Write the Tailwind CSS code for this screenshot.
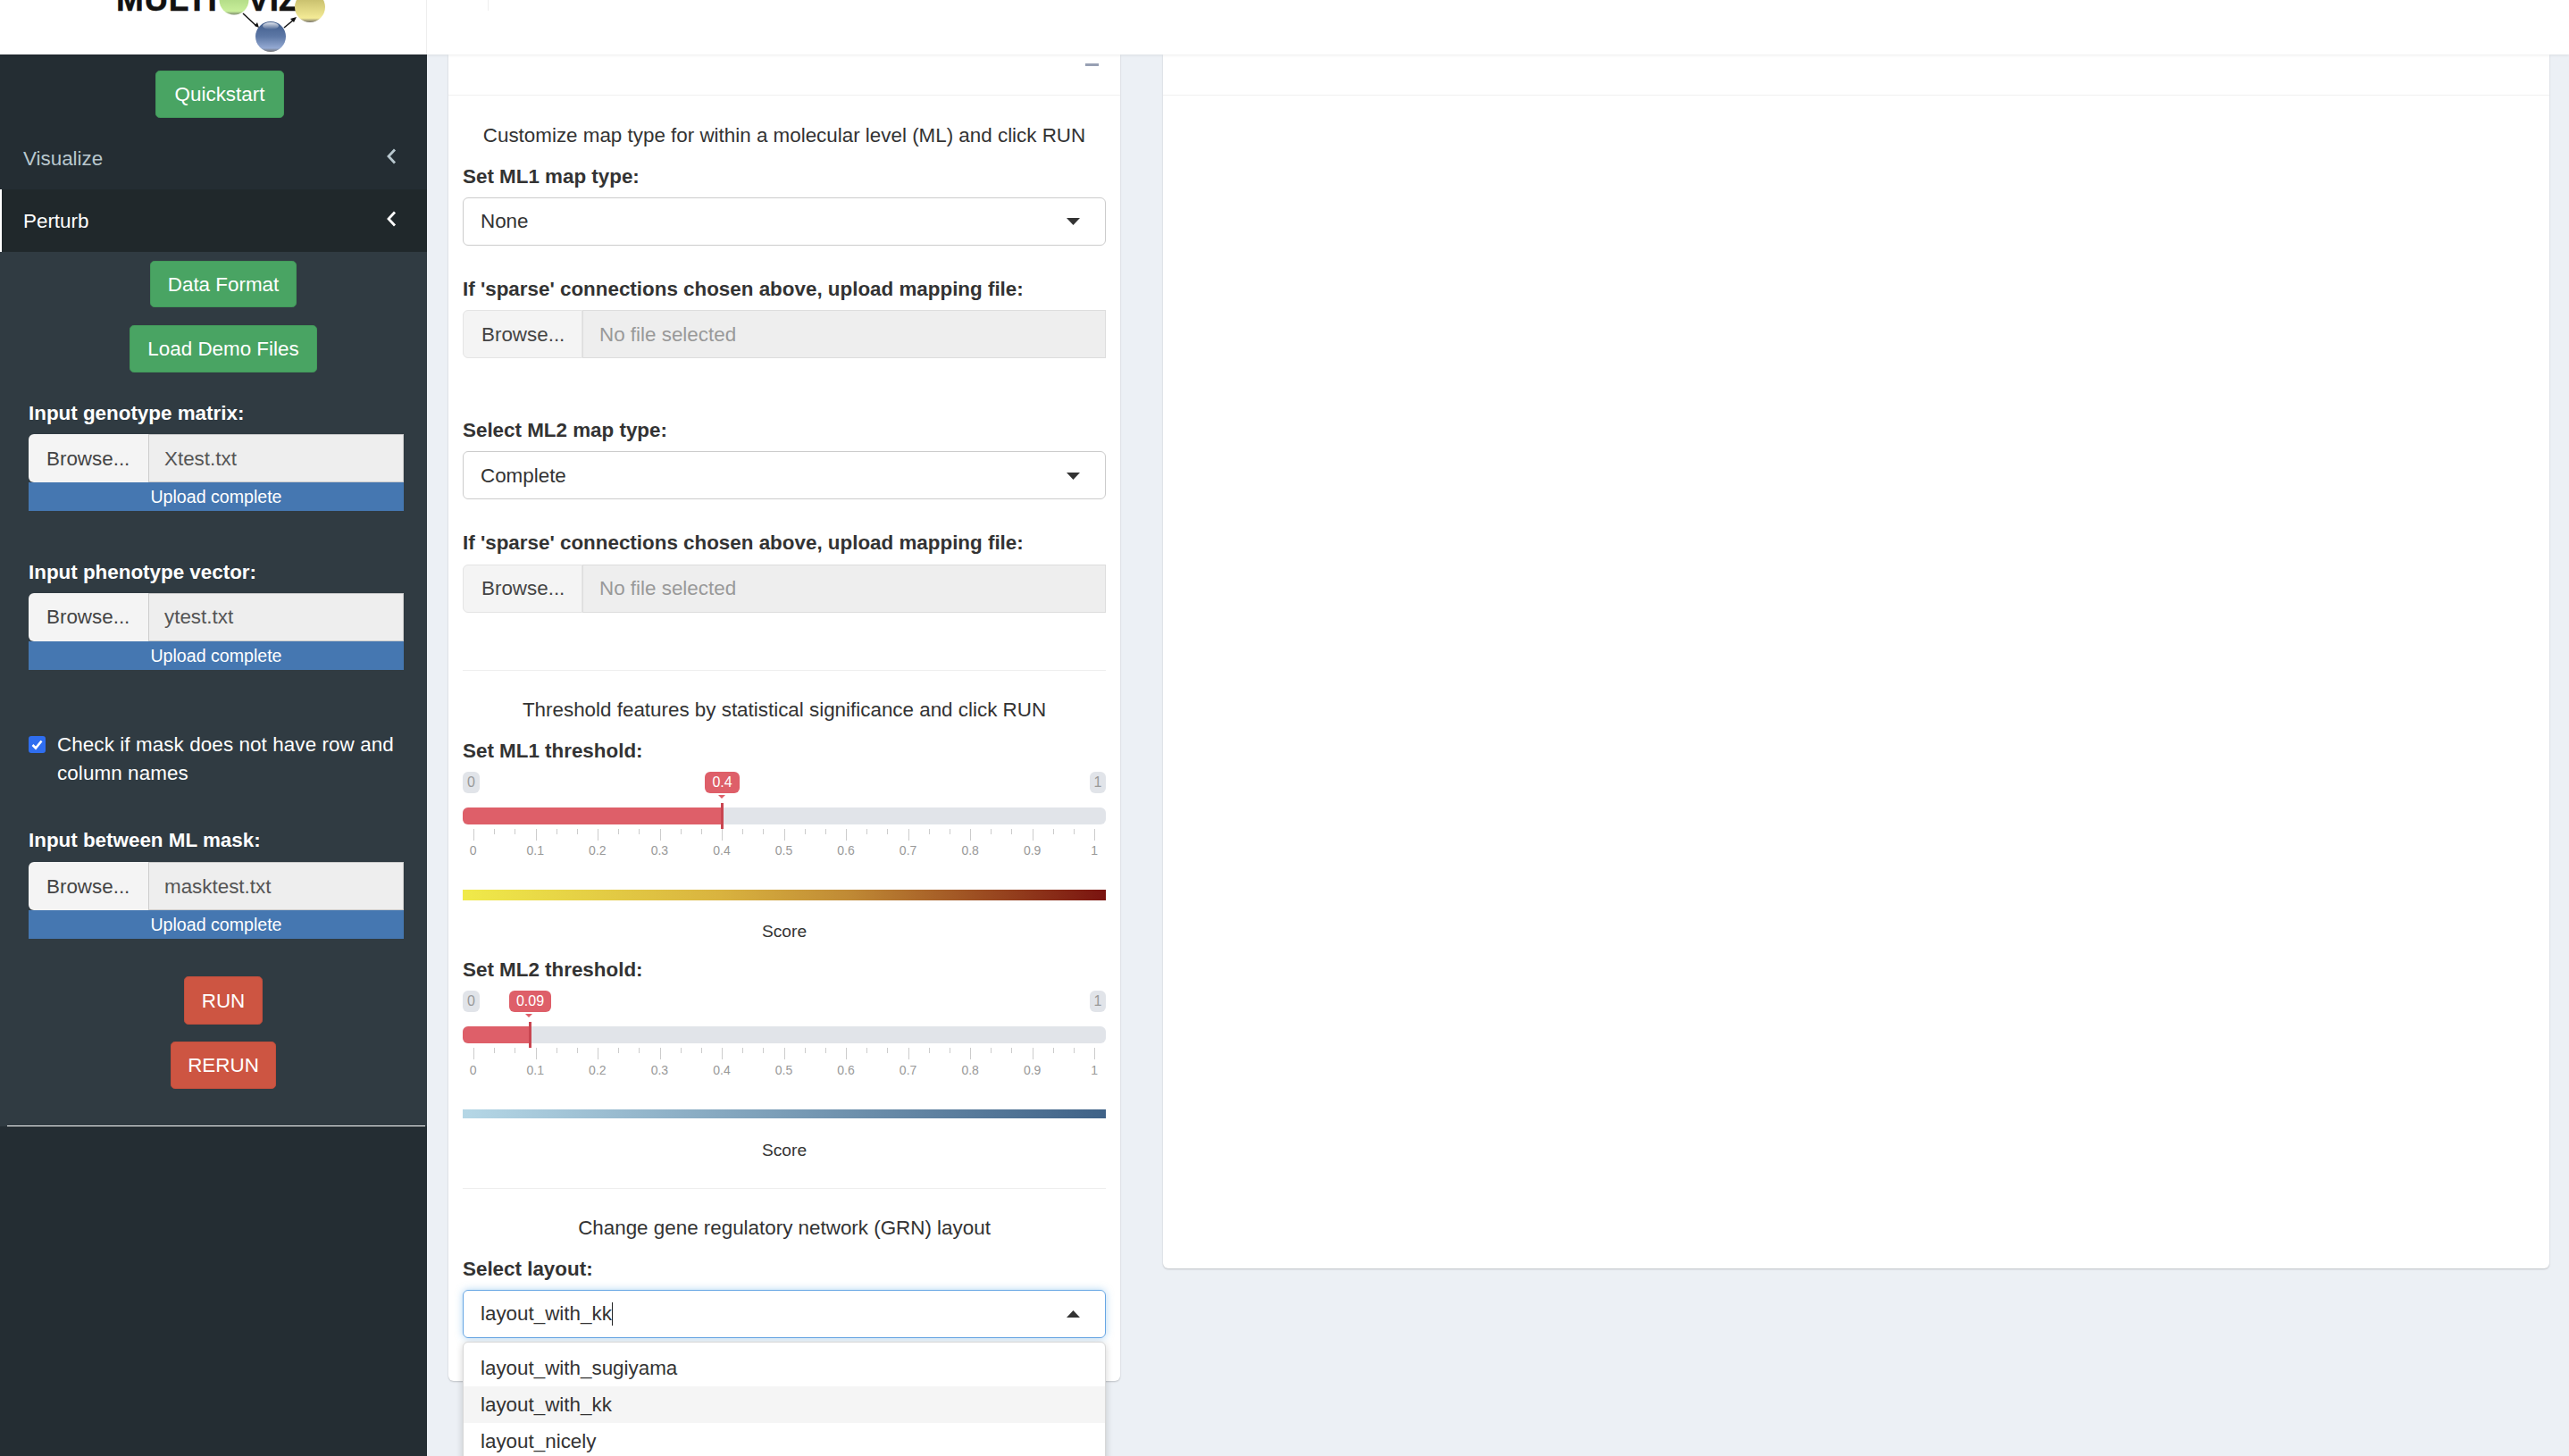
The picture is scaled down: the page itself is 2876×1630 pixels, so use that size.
<!DOCTYPE html>
<html lang="en">
<head>
    <meta charset="UTF-8">
    <title>Multi-Viz</title>
    <script src="https://cdn.jsdelivr.net/npm/@tailwindcss/browser@4"></script>
</head>
<body class="bg-[#ecf0f5]">
<div class="w-[2876px] h-[1630px] overflow-hidden flex flex-col font-['Liberation_Sans',Arial,sans-serif] text-[22.4px] text-[#333]">

    <!-- top bar -->
    <header class="h-[61px] shrink-0 flex bg-white relative z-10 shadow-[0_1px_3px_rgba(0,0,0,0.08)]">
        <div class="w-[478px] shrink-0 h-[61px] border-r border-[#eee]">
            <svg width="477" height="61" viewBox="0 0 477 61">
                <defs>
                    <linearGradient id="ballGreen" x1="0" y1="0" x2="0" y2="1"><stop offset="0" stop-color="#9cc873"/><stop offset="0.88" stop-color="#c8ee9a"/><stop offset="1" stop-color="#7f8c70"/></linearGradient>
                    <linearGradient id="ballYellow" x1="0" y1="0" x2="0" y2="1"><stop offset="0" stop-color="#b8af5e"/><stop offset="0.86" stop-color="#f4eb96"/><stop offset="1" stop-color="#76736a"/></linearGradient>
                    <linearGradient id="ballBlue" x1="0" y1="0" x2="0" y2="1"><stop offset="0" stop-color="#3f5b8a"/><stop offset="0.5" stop-color="#5d78a6"/><stop offset="0.88" stop-color="#94a9d2"/><stop offset="1" stop-color="#6e6e6e"/></linearGradient>
                    <linearGradient id="shine" x1="0" y1="0" x2="0" y2="1"><stop offset="0" stop-color="#fff" stop-opacity="0.85"/><stop offset="1" stop-color="#fff" stop-opacity="0"/></linearGradient>
                </defs>
                <text x="130" y="12" font-family="Liberation Sans" font-weight="700" font-size="37" letter-spacing="0.6" stroke="#111" stroke-width="0.5" fill="#111">MULTI</text>
                <text x="277" y="12" font-family="Liberation Sans" font-weight="700" font-size="37" stroke="#111" stroke-width="0.5" fill="#111">VIZ</text>
                <circle cx="262" cy="0" r="16.5" fill="url(#ballGreen)"/>
                <circle cx="347" cy="8" r="17" fill="url(#ballYellow)"/>
                <path d="M272 15 287 29" stroke="#111" stroke-width="1.5"/>
                <path d="M290 31 285 29 288 25Z" fill="#111"/>
                <path d="M318 31 329 22" stroke="#111" stroke-width="1.5"/>
                <path d="M332 19 329 25 325 21Z" fill="#111"/>
                <circle cx="303" cy="41" r="17" fill="url(#ballBlue)"/>
                <ellipse cx="303" cy="29" rx="9" ry="4" fill="url(#shine)"/>
            </svg>
        </div>
        <div class="ml-[68px] w-px h-[12px] bg-[#eee]"></div>
    </header>

    <div class="flex-1 flex min-h-0">

        <!-- sidebar -->
        <aside class="w-[478px] shrink-0 bg-[#242d33] flex flex-col">
            <a class="mt-[18px] ml-[174px] w-[144px] h-[53px] pt-[1px] flex items-center justify-center rounded-[4.8px] border border-[#439a5b] bg-[#49a463] text-white">Quickstart</a>

            <div class="mt-[10px] h-[70px] pl-[26px] pr-[34px] flex items-center justify-between text-[#b8c7ce]">
                <span class="pt-[2px]">Visualize</span>
                <svg width="12" height="18" viewBox="0 0 12 18" class="mt-[-4px]"><path d="M10 1.5 3 9l7 7.5" fill="none" stroke="#b8c7ce" stroke-width="2.8"/></svg>
            </div>
            <div class="h-[70px] pl-[24px] pr-[34px] flex items-center justify-between border-l-2 border-white bg-[#20282b] text-white">
                <span class="pt-[2px]">Perturb</span>
                <svg width="12" height="18" viewBox="0 0 12 18" class="mt-[-4px]"><path d="M10 1.5 3 9l7 7.5" fill="none" stroke="#fff" stroke-width="2.8"/></svg>
            </div>

            <div class="bg-[#303b42] h-[979px] flex flex-col">
                <a class="mt-[10px] ml-[168px] w-[164px] h-[52px] pt-[1px] flex items-center justify-center rounded-[4.8px] border border-[#439a5b] bg-[#49a463] text-white">Data Format</a>
                <a class="mt-[20px] ml-[145px] w-[210px] h-[53px] pt-[1px] flex items-center justify-center rounded-[4.8px] border border-[#439a5b] bg-[#49a463] text-white">Load Demo Files</a>

                <label class="block mt-[30px] ml-[32px] h-[32px] leading-[32px] font-bold text-white">Input genotype matrix:</label>
                <div class="mt-[7px] mx-[32px] w-[420px]">
                    <div class="flex h-[54px]">
                        <span class="w-[134px] pt-[1px] flex items-center pl-[20px] bg-[#f4f4f4] text-[#444] rounded-tl-[6px] rounded-bl-[6px]">Browse...</span>
                        <span class="flex-1 pt-[1px] flex items-center pl-[17px] bg-[#eee] text-[#555] border border-[#ccc]">Xtest.txt</span>
                    </div>
                    <div class="h-[32px] pt-[1px] flex items-center justify-center bg-[#4577b1] text-white text-[19.6px]">Upload complete</div>
                </div>

                <label class="block mt-[52px] ml-[32px] h-[32px] pt-[1px] leading-[32px] font-bold text-white">Input phenotype vector:</label>
                <div class="mt-[8px] mx-[32px] w-[420px]">
                    <div class="flex h-[54px]">
                        <span class="w-[134px] flex items-center pl-[20px] bg-[#f4f4f4] text-[#444] rounded-tl-[6px] rounded-bl-[6px]">Browse...</span>
                        <span class="flex-1 flex items-center pl-[17px] bg-[#eee] text-[#555] border border-[#ccc]">ytest.txt</span>
                    </div>
                    <div class="h-[32px] pt-[1px] flex items-center justify-center bg-[#4577b1] text-white text-[19.6px]">Upload complete</div>
                </div>

                <div class="mt-[67px] ml-[32px] w-[420px] flex text-white leading-[32px]">
                    <span class="mt-[7px] w-[19px] h-[19px] shrink-0 rounded-[3px] bg-[#2f6ef0] flex items-center justify-center">
                        <svg width="15" height="15" viewBox="0 0 15 15"><path d="M2.5 8 6 11.5 12.5 3.5" fill="none" stroke="#fff" stroke-width="2.6"/></svg>
                    </span>
                    <span class="ml-[13px] pt-[1px] tracking-[0.1px]">Check if mask does not have row and column names</span>
                </div>

                <label class="block mt-[42px] ml-[32px] h-[33px] pt-[1px] leading-[32px] font-bold text-white">Input between ML mask:</label>
                <div class="mt-[8px] mx-[32px] w-[420px]">
                    <div class="flex h-[54px]">
                        <span class="w-[134px] pt-[1px] flex items-center pl-[20px] bg-[#f4f4f4] text-[#444] rounded-tl-[6px] rounded-bl-[6px]">Browse...</span>
                        <span class="flex-1 pt-[1px] flex items-center pl-[17px] bg-[#eee] text-[#555] border border-[#ccc]">masktest.txt</span>
                    </div>
                    <div class="h-[32px] pt-[1px] flex items-center justify-center bg-[#4577b1] text-white text-[19.6px]">Upload complete</div>
                </div>

                <a class="mt-[42px] ml-[206px] w-[88px] h-[54px] pt-[1px] flex items-center justify-center rounded-[4.8px] border border-[#c24f3d] bg-[#cd5542] text-white">RUN</a>
                <a class="mt-[19px] ml-[191px] w-[118px] h-[53px] flex items-center justify-center rounded-[4.8px] border border-[#c24f3d] bg-[#cd5542] text-white">RERUN</a>

                <div class="mt-auto ml-[8px] w-[468px] h-px bg-white"></div>
            </div>
        </aside>

        <!-- left box -->
        <section class="relative ml-[24px] w-[752px] h-[1485px] shrink-0 bg-white rounded-b-[6px] shadow-[0_1px_2px_rgba(0,0,0,0.2)]">
            <div class="h-[46px] border-b border-[#f0f0f0] relative">
                <span class="absolute right-[24px] top-[10px] w-[15px] h-[3px] bg-[#97a0b3]"></span>
            </div>

            <div class="px-[16px] flex flex-col">
                <p class="mt-[28px] h-[32px] pt-[1px] leading-[32px] text-center">Customize map type for within a molecular level (ML) and click RUN</p>

                <label class="mt-[14px] h-[32px] pt-[1px] leading-[32px] font-bold">Set ML1 map type:</label>
                <div class="mt-[8px] h-[54px] flex items-center justify-between pl-[19px] pr-[28px] rounded-[6px] border border-[#ccc]">
                    <span>None</span>
                    <svg width="15" height="8" viewBox="0 0 15 8"><path d="M0 0h15L7.5 8Z" fill="#333"/></svg>
                </div>

                <label class="mt-[32px] h-[32px] pt-[1px] leading-[32px] font-bold">If 'sparse' connections chosen above, upload mapping file:</label>
                <div class="mt-[8px] flex h-[54px]">
                    <span class="w-[134px] pt-[1px] flex items-center pl-[20px] bg-[#f4f4f4] text-[#444] border border-[#e4e4e4] rounded-tl-[6px] rounded-bl-[6px]">Browse...</span>
                    <span class="flex-1 pt-[1px] flex items-center pl-[18px] bg-[#eee] text-[#999] border border-[#ddd]">No file selected</span>
                </div>

                <label class="mt-[64px] h-[32px] pt-[1px] leading-[32px] font-bold">Select ML2 map type:</label>
                <div class="mt-[8px] h-[54px] pt-[1px] flex items-center justify-between pl-[19px] pr-[28px] rounded-[6px] border border-[#ccc]">
                    <span>Complete</span>
                    <svg width="15" height="8" viewBox="0 0 15 8"><path d="M0 0h15L7.5 8Z" fill="#333"/></svg>
                </div>

                <label class="mt-[32px] h-[32px] pt-[1px] leading-[32px] font-bold">If 'sparse' connections chosen above, upload mapping file:</label>
                <div class="mt-[9px] flex h-[54px]">
                    <span class="w-[134px] flex items-center pl-[20px] bg-[#f4f4f4] text-[#444] border border-[#e4e4e4] rounded-tl-[6px] rounded-bl-[6px]">Browse...</span>
                    <span class="flex-1 flex items-center pl-[18px] bg-[#eee] text-[#999] border border-[#ddd]">No file selected</span>
                </div>

                <div class="mt-[64px] h-px bg-[#eee]"></div>

                <p class="mt-[27px] h-[32px] pt-[1px] leading-[32px] text-center">Threshold features by statistical significance and click RUN</p>

                <label class="mt-[14px] h-[32px] pt-[1px] leading-[32px] font-bold">Set ML1 threshold:</label>

                <!-- slider ML1 -->
                <div class="mt-[8px] relative h-[98px] text-[16px]">
                    <div class="flex justify-between">
                        <span class="w-[19px] h-[24px] leading-[24px] text-center rounded-[6px] bg-[#e1e4e9] text-[#999]">0</span>
                        <span class="w-[18px] h-[24px] leading-[24px] text-center rounded-[6px] bg-[#e1e4e9] text-[#999]">1</span>
                    </div>
                    <span class="absolute left-[271px] top-0 w-[39px] h-[24px] leading-[24px] text-center rounded-[6px] bg-[#de5f69] text-white">0.4</span>
                    <svg class="absolute left-[286px] top-[26px]" width="8" height="4" viewBox="0 0 8 4"><path d="M0 0h8L4 4Z" fill="#de5f69"/></svg>
                    <div class="mt-[16px] h-[19px] rounded-[6px] bg-[#e1e4e9] overflow-hidden">
                        <div class="w-[289px] h-full bg-[#de5f69]"></div>
                    </div>
                    <span class="absolute left-[289px] top-[35px] w-[3px] h-[29px] bg-[#c94651]"></span>
                    <svg class="block mt-[5px] ml-[12px]" width="696" height="13" viewBox="0 0 696 13" shape-rendering="crispEdges">
                        <path d="M.5 0v13M70 0v13M139.5 0v13M209 0v13M278.5 0v13M348 0v13M417.5 0v13M487 0v13M556.5 0v13M626 0v13M695.5 0v13" stroke="#ccc" fill="none"/>
                        <path d="M23.7 0v6M46.8 0v6M93.2 0v6M116.3 0v6M162.7 0v6M185.8 0v6M232.2 0v6M255.3 0v6M301.7 0v6M324.8 0v6M371.2 0v6M394.3 0v6M440.7 0v6M463.8 0v6M510.2 0v6M533.3 0v6M579.7 0v6M602.8 0v6M649.2 0v6M672.3 0v6" stroke="#ccc" fill="none"/>
                    </svg>
                    <div class="mt-[1px] ml-[-23px] w-[765px] grid grid-cols-11 text-center text-[14px] leading-[20px] text-[#999]">
                        <span>0</span><span>0.1</span><span>0.2</span><span>0.3</span><span>0.4</span><span>0.5</span><span>0.6</span><span>0.7</span><span>0.8</span><span>0.9</span><span>1</span>
                    </div>
                </div>

                <div class="mt-[34px] h-[12px] bg-[linear-gradient(to_right,#f0ea4a,#d9b33f_40%,#c08a35_60%,#7a130f)]"></div>
                <p class="mt-[18px] h-[32px] pt-[1px] leading-[32px] text-center text-[19.2px]">Score</p>

                <label class="mt-[11px] h-[32px] pt-[1px] leading-[32px] font-bold">Set ML2 threshold:</label>

                <!-- slider ML2 -->
                <div class="mt-[8px] relative h-[98px] text-[16px]">
                    <div class="flex justify-between">
                        <span class="w-[19px] h-[24px] leading-[24px] text-center rounded-[6px] bg-[#e1e4e9] text-[#999]">0</span>
                        <span class="w-[18px] h-[24px] leading-[24px] text-center rounded-[6px] bg-[#e1e4e9] text-[#999]">1</span>
                    </div>
                    <span class="absolute left-[52px] top-0 w-[47px] h-[24px] leading-[24px] text-center rounded-[6px] bg-[#de5f69] text-white">0.09</span>
                    <svg class="absolute left-[70px] top-[26px]" width="8" height="4" viewBox="0 0 8 4"><path d="M0 0h8L4 4Z" fill="#de5f69"/></svg>
                    <div class="mt-[16px] h-[19px] rounded-[6px] bg-[#e1e4e9] overflow-hidden">
                        <div class="w-[74px] h-full bg-[#de5f69]"></div>
                    </div>
                    <span class="absolute left-[74px] top-[35px] w-[3px] h-[29px] bg-[#c94651]"></span>
                    <svg class="block mt-[5px] ml-[12px]" width="696" height="13" viewBox="0 0 696 13" shape-rendering="crispEdges">
                        <path d="M.5 0v13M70 0v13M139.5 0v13M209 0v13M278.5 0v13M348 0v13M417.5 0v13M487 0v13M556.5 0v13M626 0v13M695.5 0v13" stroke="#ccc" fill="none"/>
                        <path d="M23.7 0v6M46.8 0v6M93.2 0v6M116.3 0v6M162.7 0v6M185.8 0v6M232.2 0v6M255.3 0v6M301.7 0v6M324.8 0v6M371.2 0v6M394.3 0v6M440.7 0v6M463.8 0v6M510.2 0v6M533.3 0v6M579.7 0v6M602.8 0v6M649.2 0v6M672.3 0v6" stroke="#ccc" fill="none"/>
                    </svg>
                    <div class="mt-[2px] ml-[-23px] w-[765px] grid grid-cols-11 text-center text-[14px] leading-[20px] text-[#999]">
                        <span>0</span><span>0.1</span><span>0.2</span><span>0.3</span><span>0.4</span><span>0.5</span><span>0.6</span><span>0.7</span><span>0.8</span><span>0.9</span><span>1</span>
                    </div>
                </div>

                <div class="mt-[35px] h-[10px] bg-[linear-gradient(to_right,#b5d7e6,#3f6287)]"></div>
                <p class="mt-[19px] h-[32px] pt-[1px] leading-[32px] text-center text-[19.2px]">Score</p>

                <div class="mt-[27px] h-px bg-[#eee]"></div>

                <p class="mt-[27px] h-[32px] pt-[1px] leading-[32px] text-center">Change gene regulatory network (GRN) layout</p>

                <label class="mt-[14px] h-[32px] pt-[1px] leading-[32px] font-bold">Select layout:</label>
                <div class="mt-[8px] h-[54px] flex items-center justify-between pl-[19px] pr-[28px] rounded-[6px] border border-[#66a6e4] shadow-[0_0_8px_rgba(102,175,233,0.5)]">
                    <span class="flex items-center">layout_with_kk<span class="w-[1.5px] h-[26px] bg-[#222]"></span></span>
                    <svg width="15" height="8" viewBox="0 0 15 8"><path d="M0 8h15L7.5 0Z" fill="#333"/></svg>
                </div>
            </div>

            <!-- open dropdown hangs over the box edge -->
            <ul class="absolute left-[16px] top-[1441px] w-[720px] h-[180px] pt-[8px] bg-white border border-[#d8d8d8] rounded-t-[6px] shadow-[0_2px_8px_rgba(0,0,0,0.18)]">
                <li class="h-[41px] leading-[41px] pl-[19px]">layout_with_sugiyama</li>
                <li class="h-[41px] leading-[41px] pl-[19px] bg-[#f5f5f5]">layout_with_kk</li>
                <li class="h-[41px] leading-[41px] pl-[19px]">layout_nicely</li>
            </ul>
        </section>

        <!-- right box -->
        <section class="ml-[48px] w-[1552px] h-[1359px] shrink-0 bg-white rounded-b-[6px] shadow-[0_1px_2px_rgba(0,0,0,0.2)]">
            <div class="h-[46px] border-b border-[#f0f0f0]"></div>
        </section>
    </div>
</div>
</body>
</html>
